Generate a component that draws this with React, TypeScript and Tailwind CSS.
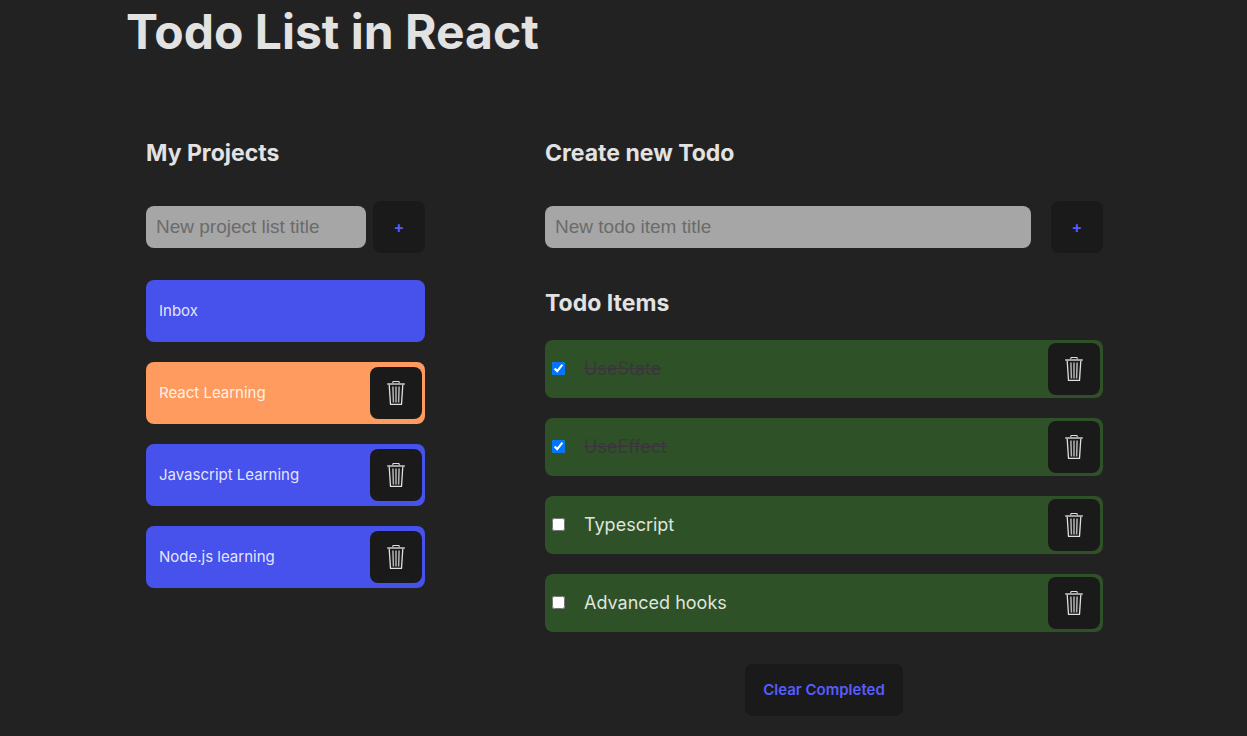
import { useState } from "react";
import type { FormEvent, ReactNode } from "react";

type Project = { id: number; title: string; fixed?: boolean };
type Todo = { id: number; title: string; done: boolean };

const initialProjects: Project[] = [
  { id: 1, title: "Inbox", fixed: true },
  { id: 2, title: "React Learning" },
  { id: 3, title: "Javascript Learning" },
  { id: 4, title: "Node.js learning" },
];

const initialTodos: Todo[] = [
  { id: 1, title: "UseState", done: true },
  { id: 2, title: "UseEffect", done: true },
  { id: 3, title: "Typescript", done: false },
  { id: 4, title: "Advanced hooks", done: false },
];

function TrashIcon() {
  return (
    <svg width="18" height="26" viewBox="0 0 18 26" fill="none" stroke="#dedede" aria-hidden="true">
      <path d="M5.8 3.2V2.2Q5.8 1.5 6.5 1.5H11.5Q12.2 1.5 12.2 2.2V3.2" strokeWidth="1.1" />
      <path d="M0.5 3.5H17.5V4.5H0.5Z" strokeWidth="0.8" stroke="#b4b4b4" fill="#8a8a8a" />
      <path d="M2.2 4.8L3.5 24.4H14.5L15.8 4.8" strokeWidth="1.3" strokeLinejoin="round" />
      <path d="M5.9 6.5L6.4 22.5M9 6.5V22.5M12.1 6.5L11.6 22.5" strokeWidth="1.5" stroke="#b4b4b4" />
    </svg>
  );
}

type ButtonProps = {
  children: ReactNode;
  label?: string;
  type?: "button" | "submit";
  onClick?: () => void;
};

function SquareButton({ children, label, type = "button", onClick }: ButtonProps) {
  return (
    <button
      type={type}
      aria-label={label}
      onClick={onClick}
      className="flex size-[52px] shrink-0 items-center justify-center rounded-lg bg-[#1a1a1a] text-base font-semibold text-[#575dff]"
    >
      {children}
    </button>
  );
}

type AddFormProps = {
  label: string;
  placeholder: string;
  gap: string;
  onAdd: (title: string) => void;
};

function AddForm({ label, placeholder, gap, onAdd }: AddFormProps) {
  const [value, setValue] = useState("");
  const submit = (event: FormEvent) => {
    event.preventDefault();
    if (!value.trim()) return;
    onAdd(value.trim());
    setValue("");
  };
  return (
    <form onSubmit={submit} className={`flex items-center ${gap}`}>
      <input
        type="text"
        aria-label={label}
        placeholder={placeholder}
        value={value}
        onChange={(event) => setValue(event.target.value)}
        className="h-[42px] w-full min-w-0 rounded-lg bg-[#a6a6a6] px-2.5 font-['Liberation_Sans',Arial,sans-serif] text-[19px] text-[#242424] placeholder:text-[#6b6b6b]"
      />
      <SquareButton type="submit" label={label}>
        +
      </SquareButton>
    </form>
  );
}

export default function App() {
  const [projects, setProjects] = useState(initialProjects);
  const [selected, setSelected] = useState(2);
  const [todos, setTodos] = useState(initialTodos);

  return (
    <div className="min-h-screen bg-[#222222] pr-[124px] pb-5 pl-[126px] font-['Inter',sans-serif] text-[#e2e2e2]">
      <h1 className="text-5xl leading-[64px] font-bold">Todo List in React</h1>
      <main className="grid grid-cols-[1fr_2fr] gap-x-30 px-5 pt-[73px]">
        <section>
          <h2 className="mb-8 text-[23px] leading-8 font-bold">My Projects</h2>
          <AddForm
            label="Add project"
            placeholder="New project list title"
            gap="gap-[7px]"
            onAdd={(title) => setProjects([...projects, { id: Date.now(), title }])}
          />
          <ul className="mt-[27px] flex flex-col gap-5">
            {projects.map((project) => (
              <li
                key={project.id}
                className={`flex h-[62px] items-center rounded-lg pr-[3px] ${
                  project.id === selected ? "bg-[#ff9b5f]" : "bg-[#4652eb]"
                }`}
              >
                <button
                  type="button"
                  onClick={() => setSelected(project.id)}
                  className="h-full grow pl-[13px] text-left text-[15px] text-white/87"
                >
                  {project.title}
                </button>
                {!project.fixed && (
                  <SquareButton
                    label={`Delete ${project.title}`}
                    onClick={() => setProjects(projects.filter((p) => p.id !== project.id))}
                  >
                    <TrashIcon />
                  </SquareButton>
                )}
              </li>
            ))}
          </ul>
        </section>
        <section>
          <h2 className="mb-8 text-[23px] leading-8 font-bold">Create new Todo</h2>
          <AddForm
            label="Add todo"
            placeholder="New todo item title"
            gap="gap-5"
            onAdd={(title) => setTodos([...todos, { id: Date.now(), title, done: false }])}
          />
          <h2 className="mt-[34px] text-[23px] leading-8 font-bold">Todo Items</h2>
          <ul className="mt-[21px] flex flex-col gap-5">
            {todos.map((todo) => (
              <li
                key={todo.id}
                className="flex h-[58px] items-center rounded-lg bg-[#2f5128] pr-[3px] pl-[7px]"
              >
                <label className="flex h-full grow items-center gap-[19px] pb-px text-lg">
                  <input
                    type="checkbox"
                    checked={todo.done}
                    onChange={() =>
                      setTodos(todos.map((t) => (t.id === todo.id ? { ...t, done: !t.done } : t)))
                    }
                    className="size-[13px] accent-[#0075ff]"
                  />
                  <span className={todo.done ? "text-[#3b363b] line-through" : "text-[#dfe5de]"}>
                    {todo.title}
                  </span>
                </label>
                <SquareButton
                  label={`Delete ${todo.title}`}
                  onClick={() => setTodos(todos.filter((t) => t.id !== todo.id))}
                >
                  <TrashIcon />
                </SquareButton>
              </li>
            ))}
          </ul>
          <div className="mt-8 flex justify-center">
            <button
              type="button"
              onClick={() => setTodos(todos.filter((t) => !t.done))}
              className="h-[52px] rounded-lg bg-[#1a1a1a] px-[18px] text-[15px] font-semibold text-[#575dff]"
            >
              Clear Completed
            </button>
          </div>
        </section>
      </main>
    </div>
  );
}
